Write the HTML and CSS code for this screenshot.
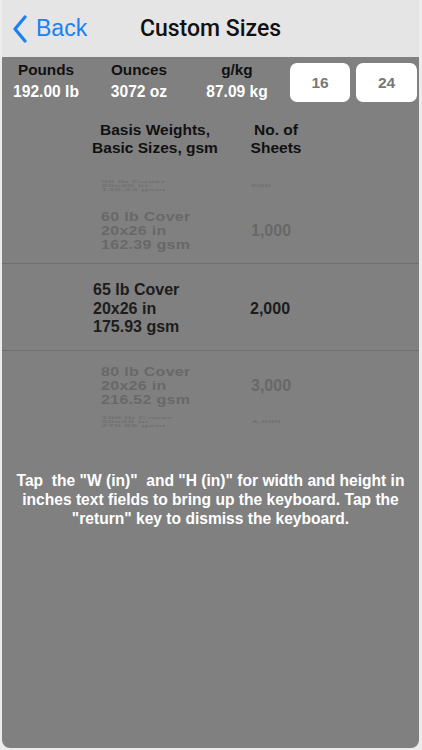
FILE: index.html
```html
<!DOCTYPE html>
<html>
<head>
<meta charset="utf-8">
<link rel="stylesheet" href="styles.css">
</head>
<body>
<div class="screen">
  <header class="nav">
    <div class="back">
      <svg class="chev" width="16" height="28" viewBox="0 0 16 28"><polyline points="13,2 3,14 13,26" fill="none" stroke="#1a80f4" stroke-width="3.2" stroke-linecap="round" stroke-linejoin="round"/></svg>
      <span class="back-text">Back</span>
    </div>
    <div class="title">Custom Sizes</div>
  </header>

  <section class="stats">
    <div class="stat s1"><div class="lbl">Pounds</div><div class="val">192.00 lb</div></div>
    <div class="stat s2"><div class="lbl">Ounces</div><div class="val">3072 oz</div></div>
    <div class="stat s3"><div class="lbl">g/kg</div><div class="val">87.09 kg</div></div>
    <div class="btn b1">16</div>
    <div class="btn b2">24</div>
  </section>

  <section class="heads">
    <div class="h1">Basis Weights,<br>Basic Sizes, gsm</div>
    <div class="h2">No. of<br>Sheets</div>
  </section>

  <section class="picker">
    <div class="row tiny t1">
      <div class="cell left"><div class="squash s-tiny">50 lb Cover<br>20x26 in<br>135.33 gsm</div></div>
      <div class="cell right"><div class="squash s-tiny">500</div></div>
    </div>
    <div class="row far r60">
      <div class="cell left"><div class="squash s-far">60 lb Cover<br>20x26 in<br>162.39 gsm</div></div>
      <div class="cell right">1,000</div>
    </div>
    <div class="row sel">
      <div class="cell left">65 lb Cover<br>20x26 in<br>175.93 gsm</div>
      <div class="cell right">2,000</div>
    </div>
    <div class="row far r80">
      <div class="cell left"><div class="squash s-far">80 lb Cover<br>20x26 in<br>216.52 gsm</div></div>
      <div class="cell right">3,000</div>
    </div>
    <div class="row tiny t2">
      <div class="cell left"><div class="squash s-tiny">100 lb Cover<br>20x26 in<br>270.65 gsm</div></div>
      <div class="cell right"><div class="squash s-tiny">4,000</div></div>
    </div>
  </section>

  <p class="help">Tap&nbsp; the "W (in)"&nbsp; and "H (in)" for width and height in<br>inches text fields to bring up the keyboard. Tap the<br>"return" key to dismiss the keyboard.</p>
</div>
</body>
</html>
```
FILE: styles.css
```css
html, body {
  margin: 0;
  padding: 0;
}
body {
  width: 422px;
  height: 750px;
  background: #ececec;
  font-family: "Liberation Sans", Arial, sans-serif;
  overflow: hidden;
}
.screen {
  width: 417px;
  height: 748px;
  margin-left: 2px;
  background: #808080;
  border-radius: 0 0 8px 8px;
  overflow: hidden;
  display: flex;
  flex-direction: column;
}
.nav {
  height: 57px;
  background: #e5e5e5;
  display: flex;
  align-items: center;
  position: relative;
  flex-shrink: 0;
}
.back {
  display: flex;
  align-items: center;
  gap: 8px;
  padding-left: 10px;
  color: #1a80f4;
}
.back-text {
  font-size: 23px;
  font-family: "Liberation Sans", Arial, sans-serif;
}
.title {
  position: absolute;
  left: 0;
  right: 0;
  text-align: center;
  font-size: 23px;
  color: #111;
  font-family: Roboto, "Liberation Sans", sans-serif;
  font-weight: 500;
  pointer-events: none;
}
.stats {
  display: flex;
  align-items: flex-start;
  height: 53px;
  flex-shrink: 0;
}
.stat {
  text-align: center;
  font-weight: bold;
  font-size: 15.3px;
  padding-top: 4px;
}
.s1 { width: 88px; }
.s2 { width: 98px; }
.s3 { width: 98px; }
.lbl {
  color: #111;
  line-height: 18px;
}
.val {
  color: #fff;
  line-height: 18px;
  margin-top: 4px;
  font-size: 15.6px;
}
.btn {
  background: #fff;
  border-radius: 7px;
  height: 39px;
  margin-top: 6px;
  display: flex;
  align-items: center;
  justify-content: center;
  color: #777;
  font-weight: bold;
  font-size: 15.5px;
}
.b1 { width: 60px; margin-left: 4px; }
.b2 { width: 61px; margin-left: 6px; }
.heads {
  display: flex;
  padding-top: 11px;
  font-weight: bold;
  font-size: 15.5px;
  line-height: 18px;
  color: #111;
  text-align: center;
  flex-shrink: 0;
}
.h1 { width: 150px; margin-left: 78px; }
.h2 { width: 80px; margin-left: 6px; }
.picker {
  margin-top: 16px;
  flex-shrink: 0;
}
.row {
  display: flex;
  align-items: center;
  font-weight: bold;
  font-size: 16px;
}
.tiny { color: #6e6e6e; }
.t1 { height: 26px; }
.t2 { height: 10px; }
.tiny .left { width: 150px; padding-left: 99px; }
.far { color: #686868; }
.r60 { height: 64px; border-bottom: 1px solid #6f6f6f; }
.r80 { height: 63px; padding-top: 3px; border-top: 1px solid #6f6f6f; }
.far .left { width: 150px; padding-left: 99px; }
.sel {
  height: 86px;
  padding-top: 4px;
  box-sizing: border-box;
  color: #1c1c1c;
  line-height: 18.5px;
}
.sel .left { width: 157px; padding-left: 91px; }
.squash { line-height: 18px; }
.s-far { transform: scaleY(0.78); transform-origin: left center; letter-spacing: 0.3px; }
.s-tiny { transform: scaleY(0.22); transform-origin: left center; font-size: 12px; opacity: 0.8; }
.help {
  margin: 44px 0 0;
  text-align: center;
  color: #fff;
  font-weight: bold;
  font-size: 15.6px;
  line-height: 19px;
  white-space: nowrap;
}
```
